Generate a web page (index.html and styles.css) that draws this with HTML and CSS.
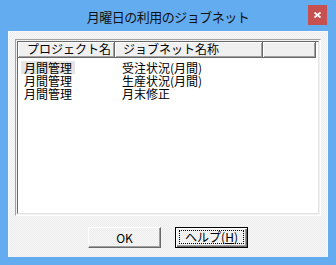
FILE: index.html
```html
<!DOCTYPE html>
<html lang="ja">
<head>
    <meta charset="UTF-8">
    <title>月曜日の利用のジョブネット</title>
    <link rel="stylesheet" href="styles.css">
</head>
<body>

<div class="window">
    <div class="titlebar">
        <span class="title">月曜日の利用のジョブネット</span>
        <div class="close-btn">
            <svg width="7" height="6" viewBox="0 0 7 6">
                <path d="M0.5 0.5 L6.5 5.5 M6.5 0.5 L0.5 5.5" stroke="#fff" stroke-width="1.8"/>
            </svg>
        </div>
    </div>

    <div class="client">
        <div class="list-frame">
            <div class="list">
                <div class="list-header">
                    <div class="col-head col-project">プロジェクト名</div>
                    <div class="col-head col-jobnet">ジョブネット名称</div>
                    <div class="col-head col-rest"></div>
                </div>
                <div class="list-rows">
                    <div class="list-row">
                        <div class="cell col-project"><span class="selected">月間管理</span></div>
                        <div class="cell col-jobnet">受注状況(月間)</div>
                    </div>
                    <div class="list-row">
                        <div class="cell col-project"><span class="plain">月間管理</span></div>
                        <div class="cell col-jobnet">生産状況(月間)</div>
                    </div>
                    <div class="list-row">
                        <div class="cell col-project"><span class="plain">月間管理</span></div>
                        <div class="cell col-jobnet">月末修正</div>
                    </div>
                </div>
            </div>
        </div>

        <div class="buttons">
            <button type="button" class="btn">OK</button>
            <button type="button" class="btn btn-default"><span class="focus">ヘルプ(<u>H</u>)</span></button>
        </div>
    </div>
</div>

</body>
</html>
```

FILE: styles.css
```css
body {
    margin: 0;
    font-family: "Noto Sans CJK JP", "Liberation Sans", sans-serif;
    font-size: 12px;
    color: #000;
}
.window {
    width: 336px;
    height: 265px;
    box-sizing: border-box;
    background: #63acef;
    padding: 0 8px 8px 8px;
    display: flex;
    flex-direction: column;
    position: relative;
}
.titlebar {
    height: 31px;
    box-sizing: border-box;
    padding-top: 2px;
    display: flex;
    align-items: center;
    justify-content: center;
}
.title {
    font-size: 13px;
    letter-spacing: -0.5px;
    line-height: 16px;
    color: #111;
}
.close-btn {
    position: absolute;
    top: 5px;
    right: 9px;
    width: 19px;
    height: 20px;
    background: #c75050;
    display: flex;
    align-items: center;
    justify-content: center;
}
.client {
    flex: 1;
    box-sizing: border-box;
    padding: 8px 7px 0 7px;
    background-color: #f0f0f0;
    background-image: conic-gradient(#ececec 25%, #f7f7f7 0 50%, #ececec 0 75%, #f7f7f7 0);
    background-size: 2px 2px;
    border: 1px solid #f8f8f8;
    border-bottom: none;
}
.list-frame {
    height: 177px;
    box-sizing: border-box;
    border: 1px solid;
    border-color: #a0a0a0 #fff #fff #a0a0a0;
    padding: 1px;
    margin-top: -1px;
    margin-left: -1px;
    margin-right: -1px;
}
.list {
    height: 100%;
    box-sizing: border-box;
    border: 1px solid;
    border-color: #696969 #e3e3e3 #e3e3e3 #696969;
    background: #fff;
}
.list-header {
    display: flex;
    height: 16px;
}
.col-head {
    box-sizing: border-box;
    height: 16px;
    line-height: 14px;
    padding-left: 9px;
    background: #f0f0f0;
    border-right: 1px solid #696969;
    border-bottom: 1px solid #696969;
    box-shadow: inset 1px 1px #fff, inset -1px -1px #a0a0a0;
    white-space: nowrap;
}
.col-project {
    width: 97px;
    flex-shrink: 0;
}
.col-jobnet {
    width: 148px;
    flex-shrink: 0;
}
.col-head.col-jobnet {
    padding-left: 8px;
}
.col-rest {
    flex: 1;
    margin-right: 2px;
}
.list-rows {
    padding-top: 3px;
}
.list-row {
    display: flex;
    height: 13px;
    line-height: 13px;
}
.cell {
    box-sizing: border-box;
    white-space: nowrap;
}
.cell.col-jobnet {
    padding-left: 7px;
}
.selected,
.plain {
    display: inline-block;
    margin-left: 3px;
    padding: 0 3px;
}
.selected {
    background: #e5e5e5;
}
.buttons {
    display: flex;
    justify-content: center;
    gap: 14px;
    margin-top: 11px;
}
.btn {
    width: 73px;
    height: 21px;
    box-sizing: border-box;
    padding: 0;
    font-family: inherit;
    font-size: 12px;
    line-height: 14px;
    color: #000;
    background-color: #f0f0f0;
    background-image: conic-gradient(#ececec 25%, #f7f7f7 0 50%, #ececec 0 75%, #f7f7f7 0);
    background-size: 2px 2px;
    border: 1px solid;
    border-color: #fff #696969 #696969 #fff;
    box-shadow: inset -1px -1px #a0a0a0;
    border-radius: 0;
}
.btn-default {
    border-color: #000;
    box-shadow: inset 1px 1px #fff, inset -1px -1px #696969, inset -2px -2px #a0a0a0;
    display: flex;
    padding: 2px 3px 3px 3px;
}
.focus {
    flex: 1;
    border: 1px dotted #000;
    line-height: 12px;
}
.focus u {
    text-underline-offset: 1px;
}
```
